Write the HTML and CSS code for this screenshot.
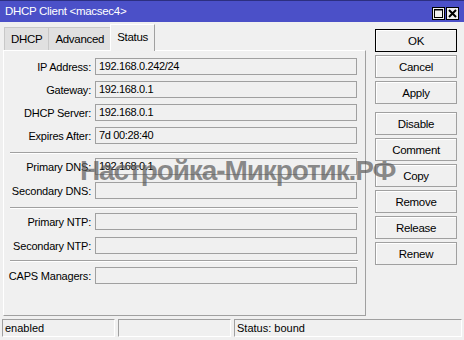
FILE: index.html
```html
<html lang="ru">

<head>
  <meta charset="utf-8">
  <title>DHCP Client &lt;macsec4&gt;</title>
  <link rel="stylesheet" href="styles.css">
</head>

<body>

  <div class="titlebar">
    <span class="title">DHCP Client &lt;macsec4&gt;</span>
    <span class="winbtns">
      <span class="winbtn">
        <svg width="11" height="11" viewBox="0 0 11 11"><rect x="1.5" y="1.5" width="8" height="8" fill="none" stroke="#000" /><line x1="1" y1="2" x2="10" y2="2" stroke="#000" stroke-width="1" /></svg>
      </span>
      <span class="winbtn">
        <svg width="11" height="11" viewBox="0 0 11 11"><path d="M2 2 L9 9 M9 2 L2 9" stroke="#000" stroke-width="2" /></svg>
      </span>
    </span>
  </div>

  <div class="main">
    <div class="left">
      <div class="tabs">
        <div class="tab">DHCP</div>
        <div class="tab">Advanced</div>
        <div class="tab active">Status</div>
      </div>
      <div class="panel">
        <div class="section">
          <div class="row"><label>IP Address:</label><div class="field">192.168.0.242/24</div></div>
          <div class="row"><label>Gateway:</label><div class="field">192.168.0.1</div></div>
          <div class="row"><label>DHCP Server:</label><div class="field">192.168.0.1</div></div>
          <div class="row"><label>Expires After:</label><div class="field">7d 00:28:40</div></div>
        </div>
        <div class="sep"></div>
        <div class="section wide">
          <div class="row"><label>Primary DNS:</label><div class="field">192.168.0.1</div></div>
          <div class="row"><label>Secondary DNS:</label><div class="field"></div></div>
        </div>
        <div class="sep"></div>
        <div class="section wide">
          <div class="row"><label>Primary NTP:</label><div class="field"></div></div>
          <div class="row"><label>Secondary NTP:</label><div class="field"></div></div>
        </div>
        <div class="sep last"></div>
        <div class="section">
          <div class="row"><label>CAPS Managers:</label><div class="field"></div></div>
        </div>
      </div>
    </div>

    <div class="buttons">
      <button class="default">OK</button>
      <button>Cancel</button>
      <button>Apply</button>
      <button class="group">Disable</button>
      <button>Comment</button>
      <button>Copy</button>
      <button>Remove</button>
      <button>Release</button>
      <button>Renew</button>
    </div>
  </div>

  <div class="statusbar">
    <div class="cell">enabled</div>
    <div class="cell"></div>
    <div class="cell grow">Status: bound</div>
  </div>

  <div class="watermark">Настройка-Микротик.РФ</div>

</body>

</html>
```

FILE: styles.css
```css
body {
  font-family: 'Liberation Sans', Arial, sans-serif;
  font-size: 11px;
  background-color: #f0f0f0;
  color: #000;
  margin: 0;
  padding: 0;
  width: 464px;
  height: 340px;
  overflow: hidden;
  position: relative;
}

.titlebar {
  height: 21px;
  border-top: 1px solid #2c2f80;
  background-color: #4b50c8;
  color: #fff;
  display: flex;
  align-items: center;
  justify-content: space-between;
}

.title {
  font-size: 11.5px;
  letter-spacing: -0.3px;
  padding-left: 5px;
  padding-bottom: 1px;
}

.winbtns {
  display: flex;
  gap: 1px;
  padding-right: 5px;
  padding-top: 3px;
}

.winbtn {
  width: 11px;
  height: 11px;
  border: 1px solid #000;
  background-color: #f0f0f0;
  display: flex;
}

.main {
  display: flex;
  padding: 2px 0 0 3px;
}

.left {
  width: 363px;
}

.tabs {
  display: flex;
  align-items: flex-end;
  height: 26px;
  padding-left: 1px;
}

.tab {
  height: 22px;
  line-height: 23px;
  padding: 0 6px;
  background-color: #e0e0e0;
  border: 1px solid #c8c8c8;
  border-bottom: none;
  border-right: none;
  font-size: 11.5px;
  letter-spacing: -0.3px;
}

.tab.active {
  height: 26px;
  line-height: 24px;
  background-color: #f0f0f0;
  border-top: 1px solid #fff;
  border-left: 1px solid #fff;
  border-right: 1px solid #a0a0a0;
  margin-bottom: -1px;
  position: relative;
  padding: 0 6px;
}

.panel {
  box-sizing: border-box;
  height: 266px;
  border-top: 1px solid #fff;
  border-left: 1px solid #fff;
  border-right: 1px solid #a0a0a0;
  border-bottom: 1px solid #a0a0a0;
  padding: 7px 7px 0 0;
}

.section {
  display: flex;
  flex-direction: column;
  gap: 6px;
}

.section.wide {
  gap: 7px;
}

.row {
  display: flex;
  align-items: center;
  gap: 4px;
  height: 17px;
}

.row label {
  width: 87px;
  text-align: right;
  letter-spacing: -0.2px;
}

.field {
  height: 15px;
  line-height: 15px;
  border: 1px solid #a0a0a0;
  padding-left: 3px;
  width: 257px;
  letter-spacing: -0.35px;
}

.sep {
  margin: 8px 0 4px 6px;
  height: 0;
  border-top: 1px solid #a0a0a0;
  border-bottom: 1px solid #fff;
}

.sep.last {
  margin-top: 6px;
  margin-bottom: 5px;
}

.buttons {
  display: flex;
  flex-direction: column;
  gap: 3px;
  padding-top: 5px;
  margin-left: 9px;
}

.buttons button {
  width: 82px;
  height: 23px;
  font-family: inherit;
  font-size: 11.5px;
  letter-spacing: -0.3px;
  background-color: #f0f0f0;
  border: 1px solid #a0a0a0;
  box-shadow: inset 1px 1px 0 #fff;
  padding: 0;
  color: #000;
}

.buttons button.default {
  border: 1px solid #000;
}

.buttons button.group {
  margin-top: 5px;
}

.statusbar {
  display: flex;
  gap: 3px;
  margin-top: 3px;
  padding: 0 2px;
  height: 18px;
}

.cell {
  width: 109px;
  border-top: 1px solid #a0a0a0;
  border-left: 1px solid #a0a0a0;
  border-bottom: 1px solid #fff;
  border-right: 1px solid #fff;
  line-height: 17px;
  padding-left: 2px;
}

.cell.grow {
  flex: 1;
}

.watermark {
  position: absolute;
  left: 80px;
  top: 155px;
  font-size: 28px;
  font-weight: bold;
  color: rgba(90, 90, 90, 0.7);
  letter-spacing: -1.1px;
  pointer-events: none;
}
```
